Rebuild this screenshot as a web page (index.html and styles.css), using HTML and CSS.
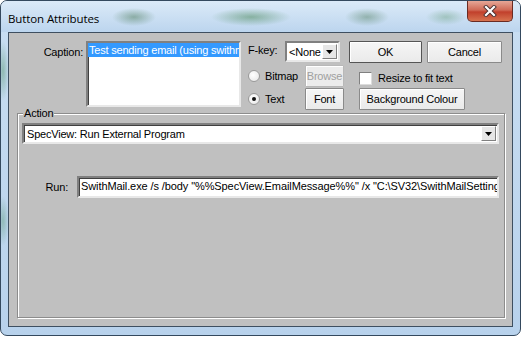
FILE: index.html
```html
<!DOCTYPE html>
<html lang="en">
<head>
    <meta charset="UTF-8">
    <title>Button Attributes</title>
    <link rel="stylesheet" href="styles.css">
</head>
<body>
    <div class="window">
        <div class="titlebar">
            <span class="title">Button Attributes</span>
            <span class="close">
                <svg width="14" height="12" viewBox="0 0 14 12">
                    <path d="M3 2 L11 10 M11 2 L3 10" stroke="#4a3030" stroke-width="4" stroke-linecap="square"/>
                    <path d="M3 2 L11 10 M11 2 L3 10" stroke="#fff" stroke-width="2.2" stroke-linecap="square"/>
                </svg>
            </span>
        </div>

        <div class="client">
            <div class="top">
                <label class="caption-label">Caption:</label>
                <div class="caption-box">
                    <span class="sel">Test sending email (using swithm</span>
                </div>

                <div class="options">
                    <div class="fkey-row">
                        <span class="fkey-label">F-key:</span>
                        <div class="select">
                            <span class="select-text">&lt;None</span>
                            <span class="drop">
                                <svg width="7" height="4" viewBox="0 0 7 4"><path d="M0 0 H7 L3.5 4 Z" fill="#000"/></svg>
                            </span>
                        </div>
                    </div>
                    <div class="opt-grid">
                        <label class="radio"><span class="dot"></span>Bitmap</label>
                        <button class="btn disabled">Browse</button>
                        <label class="radio"><span class="dot on"></span>Text</label>
                        <button class="btn">Font</button>
                    </div>
                </div>

                <div class="actions">
                    <div class="btn-row">
                        <button class="btn ok">OK</button>
                        <button class="btn cancel">Cancel</button>
                    </div>
                    <label class="check"><span class="box"></span>Resize to fit text</label>
                    <button class="btn bg-colour">Background Colour</button>
                </div>
            </div>

            <div class="group">
                <span class="legend">Action</span>
                <div class="combo">
                    <span class="combo-text">SpecView: Run External Program</span>
                    <span class="drop">
                        <svg width="7" height="4" viewBox="0 0 7 4"><path d="M0 0 H7 L3.5 4 Z" fill="#000"/></svg>
                    </span>
                </div>
                <div class="run-row">
                    <label class="run-label">Run:</label>
                    <div class="edit">SwithMail.exe /s /body "%%SpecView.EmailMessage%%" /x "C:\SV32\SwithMailSetting</div>
                </div>
            </div>
        </div>
    </div>
</body>
</html>
```

FILE: styles.css
```css
* {
    margin: 0;
    padding: 0;
    box-sizing: border-box;
}

body {
    background: #ffffff;
    font-family: "Liberation Sans", Arial, sans-serif;
    font-size: 11px;
    letter-spacing: -0.2px;
    color: #000;
}

.window {
    width: 521px;
    height: 336px;
    border: 1px solid #34495e;
    border-radius: 7px;
    padding: 0 7px 8px 7px;
    background:
        radial-gradient(ellipse 6px 30px at 2px 70px, rgba(40, 120, 60, 0.35), transparent),
        radial-gradient(ellipse 6px 25px at 2px 220px, rgba(40, 120, 60, 0.3), transparent),
        linear-gradient(#c9def2, #b8d2ec);
    display: flex;
    flex-direction: column;
}

.titlebar {
    height: 31px;
    display: flex;
    align-items: flex-start;
    justify-content: space-between;
    margin: 0 -7px;
    padding-left: 7px;
    border-radius: 6px 6px 0 0;
    background:
        radial-gradient(ellipse 22px 9px at 133px 16px, rgba(60, 110, 70, 0.45), transparent),
        radial-gradient(ellipse 40px 9px at 250px 16px, rgba(50, 120, 60, 0.45), transparent),
        radial-gradient(ellipse 22px 9px at 366px 16px, rgba(60, 110, 70, 0.4), transparent),
        radial-gradient(ellipse 20px 8px at 445px 16px, rgba(60, 130, 70, 0.3), transparent),
        linear-gradient(#dbeaf8, #bcd5ee);
}

.title {
    font-family: "Open Sans", sans-serif;
    font-size: 11.5px;
    line-height: 14px;
    margin-top: 11px;
    letter-spacing: -0.1px;
}

.close {
    width: 46px;
    height: 21px;
    margin-right: 7px;
    border: 1px solid #6a2b22;
    border-top: none;
    border-radius: 0 0 5px 5px;
    background: linear-gradient(#e6a797, #d06a56 45%, #c1402c 55%, #d7734f);
    display: flex;
    align-items: center;
    justify-content: center;
}

.client {
    flex: 1;
    border: 1px solid #3e4f60;
    background: #c0c0c0;
}

/* top part */

.top {
    display: flex;
    align-items: flex-start;
    padding-top: 8px;
    height: 78px;
}

.caption-label {
    width: 74px;
    margin-right: 3px;
    text-align: right;
    line-height: 14px;
    padding-top: 4px;
}

.caption-box {
    width: 155px;
    height: 66px;
    background: #fff;
    border: 2px solid;
    border-color: #808080 #e8e8e8 #e8e8e8 #808080;
    box-shadow: inset 1px 1px 0 #404040;
    white-space: nowrap;
    overflow: hidden;
}

.sel {
    display: inline-block;
    background: #3399ff;
    color: #fff;
    line-height: 14px;
    padding: 0 1px;
}

.options {
    width: 96px;
    margin-left: 7px;
}

.fkey-row {
    display: flex;
    height: 21px;
}

.fkey-label {
    width: 37px;
    padding-top: 3px;
}

.select {
    width: 55px;
    height: 21px;
    display: flex;
    align-items: center;
    justify-content: space-between;
    background: #fff;
    border: 2px solid;
    border-color: #808080 #e8e8e8 #e8e8e8 #808080;
    padding: 0 1px 0 2px;
    overflow: hidden;
}

.drop {
    flex: none;
    width: 15px;
    height: 15px;
    display: flex;
    align-items: center;
    justify-content: center;
    background: #e6e6e6;
    border: 1px solid;
    border-color: #fff #808080 #808080 #fff;
}

.opt-grid {
    display: grid;
    grid-template-columns: 57px 39px;
    grid-template-rows: 22px 22px;
    row-gap: 1px;
    margin-top: 3px;
}

.radio {
    display: flex;
    align-items: center;
    gap: 5px;
}

.dot {
    width: 12px;
    height: 12px;
    border-radius: 50%;
    border: 1px solid #9a9a9a;
    background: radial-gradient(circle at 40% 40%, #ffffff, #e4e4e4);
    display: flex;
    align-items: center;
    justify-content: center;
}

.dot.on::after {
    content: "";
    width: 4px;
    height: 4px;
    border-radius: 50%;
    background: #111;
}

.btn {
    font: inherit;
    letter-spacing: inherit;
    color: #000;
    height: 22px;
    background: linear-gradient(#f6f6f6, #eaeaea);
    border: 1px solid #8a8a8a;
    box-shadow: inset 1px 1px 0 #fff;
    border-radius: 1px;
}

.btn.disabled {
    color: #a0a0a0;
    border-color: #b8b8b8;
    background: #ececec;
}

.actions {
    margin-left: 5px;
    display: flex;
    flex-direction: column;
    align-items: flex-start;
}

.btn-row {
    display: flex;
    gap: 5px;
}

.btn.ok {
    width: 73px;
    border-color: #555;
}

.btn.cancel {
    width: 75px;
}

.check {
    display: flex;
    align-items: center;
    gap: 6px;
    margin: 9px 0 0 10px;
    line-height: 13px;
}

.box {
    width: 13px;
    height: 13px;
    background: #fff;
    border: 1px solid;
    border-color: #808080 #dcdcdc #dcdcdc #808080;
}

.btn.bg-colour {
    width: 106px;
    margin: 3px 0 0 10px;
}

/* action group */

.group {
    position: relative;
    margin: 2px 7px 0 8px;
    height: 205px;
    border: 1px solid #8c8c8c;
    box-shadow: inset 1px 1px 0 #fff, 1px 1px 0 #fff;
    padding: 9px 5px 0 4px;
}

.legend {
    position: absolute;
    top: -8px;
    left: 5px;
    padding: 0 1px;
    background: #c0c0c0;
    line-height: 14px;
}

.combo {
    width: 477px;
    height: 21px;
    display: flex;
    align-items: center;
    justify-content: space-between;
    background: #fff;
    border: 2px solid;
    border-color: #808080 #e8e8e8 #e8e8e8 #808080;
    box-shadow: inset 1px 1px 0 #404040;
    padding: 0 1px 0 3px;
}

.run-row {
    display: flex;
    align-items: center;
    margin-top: 32px;
}

.run-label {
    width: 46px;
    margin-right: 9px;
    text-align: right;
}

.edit {
    width: 422px;
    height: 22px;
    background: #fff;
    border: 2px solid;
    border-color: #808080 #e8e8e8 #e8e8e8 #808080;
    box-shadow: inset 1px 1px 0 #404040;
    padding: 2px 0 0 2px;
    white-space: nowrap;
    overflow: hidden;
    letter-spacing: -0.1px;
}
```
